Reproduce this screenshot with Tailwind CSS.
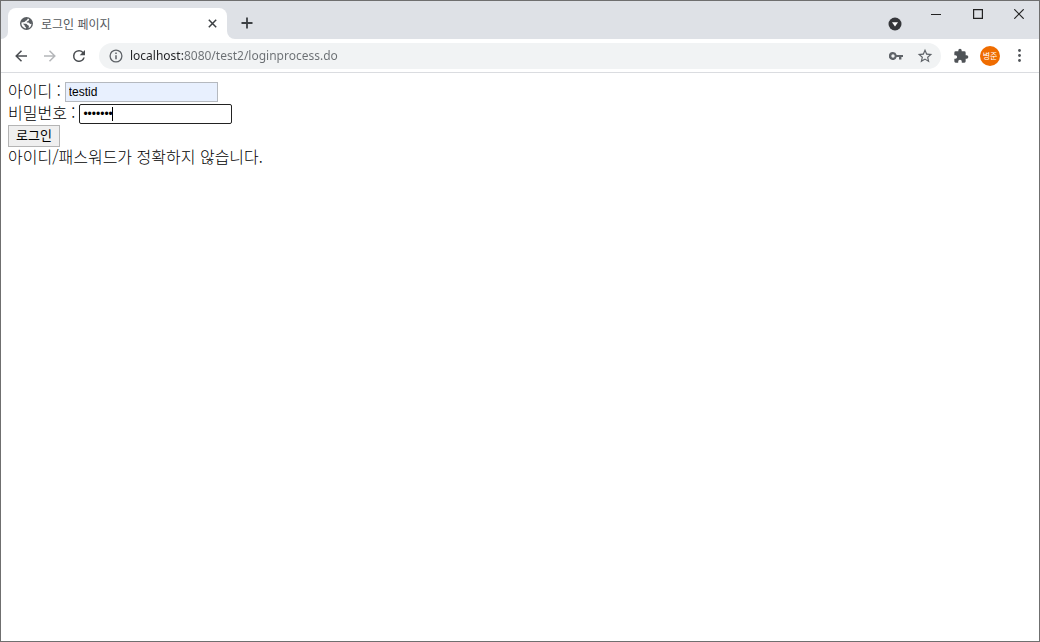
<!DOCTYPE html>
<html lang="ko">
  <head>
    <meta charset="UTF-8" />
    <title>로그인 페이지</title>
    <meta name="viewport" content="width=device-width, initial-scale=1.0" />
    <script src="https://cdn.jsdelivr.net/npm/@tailwindcss/browser@4"></script>
  </head>
  <body
    class="min-h-screen flex flex-col bg-white border border-[#6f6f6f] font-['Noto_Sans_CJK_KR',sans-serif]"
  >
    <!-- Tab strip -->
    <header class="flex h-[38px] bg-[#dee1e6] text-[#3c4043]">
      <div class="flex w-[7px] items-end bg-white">
        <span class="h-full w-full rounded-br-lg bg-[#dee1e6]"></span>
      </div>
      <div class="flex h-[31px] w-[219px] items-center self-end rounded-t-lg bg-white pl-3 pr-[7px]">
        <svg class="size-[13px] shrink-0" viewBox="0 0 14 14">
          <circle cx="7" cy="7" r="7" fill="#5a5e62" />
          <path
            fill="#fff"
            d="M8.600 1.700C7.700 2.500 8 3.500 6.700 3.900C5.500 4.100 6 5 4.800 5.500L1.600 5.900C1.300 8 1.900 9.500 2.900 10.600L4.300 11.700C5 12.100 5.700 12.300 6.300 12.300V10.900C5.300 10.700 4.900 9.900 5 9L3 7.300L6.500 7.300C7.700 7.400 7.500 8.500 8.500 8.800C9.500 8.900 9.800 9.600 9.500 11.300L8.500 12.100C11 11.700 12.300 9.500 12.400 7.200L11 7.500C10 7.300 10.200 6.200 9 6H7.400C7 5 7.800 4.700 8.600 4.600C9.400 4.300 9.300 3.300 10 2.500Z"
          />
        </svg>
        <span class="ml-2 flex-1 text-xs text-[#55595d]">로그인 페이지</span>
        <button type="button" aria-label="탭 닫기" class="flex size-4 items-center justify-center">
          <svg class="size-[9px]" viewBox="0 0 9 9" fill="none" stroke="#3c4043" stroke-width="1.500">
            <path d="M.8.8l7.400 7.400M8.200.8L.8 8.200" />
          </svg>
        </button>
      </div>
      <div class="w-2 bg-white">
        <div class="h-full w-full rounded-bl-lg bg-[#dee1e6]"></div>
      </div>
      <button type="button" aria-label="새 탭" class="ml-1 mt-[14px] flex size-4 items-center justify-center">
        <svg class="size-[12px]" viewBox="0 0 12 12" fill="none" stroke="#3c4043" stroke-width="1.800">
          <path d="M6 .5v11M.5 6h11" />
        </svg>
      </button>
      <div class="ml-auto flex">
        <button type="button" aria-label="탭 검색" class="flex w-6 items-end justify-center pb-2">
          <svg class="size-[14px]" viewBox="0 0 14 14">
            <circle cx="7" cy="7" r="6.500" fill="#35363a" />
            <path d="M4 5.200h6L7 9.400z" fill="#fff" />
          </svg>
        </button>
        <button type="button" aria-label="최소화" class="ml-2 flex h-[26px] w-[42px] items-center justify-center">
          <svg class="size-[10px]" viewBox="0 0 10 10" stroke="#222"><path d="M0 5.500h10" /></svg>
        </button>
        <button type="button" aria-label="최대화" class="flex h-[26px] w-[42px] items-center justify-center">
          <svg class="size-[10px]" viewBox="0 0 10 10" fill="none" stroke="#222" stroke-width="1.200">
            <path d="M.6.6h8.800v8.800H.6z" />
          </svg>
        </button>
        <button type="button" aria-label="닫기" class="flex h-[26px] w-10 items-center justify-center">
          <svg class="size-[10px]" viewBox="0 0 10 10" stroke="#222" stroke-width="1.200">
            <path d="M.3.3l9.400 9.400M9.700.3L.3 9.700" />
          </svg>
        </button>
      </div>
    </header>

    <!-- Toolbar -->
    <nav class="flex h-[34px] items-center border-b border-[#dadce0] px-3 text-[#5f6368]">
      <button type="button" aria-label="뒤로" class="flex size-4 items-center justify-center">
        <svg class="size-[12px]" viewBox="0 0 12 12" fill="none" stroke="#4a4d51" stroke-width="1.500">
          <path d="M12 6H1.200M6.500.7L1.200 6l5.300 5.300" />
        </svg>
      </button>
      <button type="button" aria-label="앞으로" class="ml-[13px] flex size-4 items-center justify-center">
        <svg class="size-[12px]" viewBox="0 0 12 12" fill="none" stroke="#b4b6b9" stroke-width="1.500">
          <path d="M0 6h10.800M5.500.7L10.800 6l-5.300 5.300" />
        </svg>
      </button>
      <button type="button" aria-label="새로고침" class="ml-[13px] flex size-4 items-center justify-center">
        <svg class="size-[18px] shrink-0" viewBox="0 0 24 24" fill="#4a4d51">
          <path
            d="M17.650 6.350A7.960 7.960 0 0 0 12 4a8 8 0 1 0 7.730 10h-2.080A6 6 0 1 1 12 6c1.660 0 3.140.69 4.220 1.780L13 11h7V4z"
          />
        </svg>
      </button>

      <div class="ml-3 flex h-[26px] flex-1 items-center rounded-full bg-[#f1f3f4] pl-[10px] pr-2">
        <svg class="size-[14px] shrink-0" viewBox="0 0 14 14" fill="none" stroke="#5f6368" stroke-width="1.300">
          <circle cx="7" cy="7" r="5.900" />
          <path d="M7 6.200v4M7 3.600v1.400" stroke-width="1.500" />
        </svg>
        <input
          type="text"
          aria-label="주소창"
          value="localhost:8080/test2/loginprocess.do"
          class="ml-[7px] min-w-0 flex-1 bg-[linear-gradient(to_right,#202124_54px,#6b6f73_54px)] bg-clip-text font-['Noto_Sans',sans-serif] text-xs text-transparent outline-none"
        />
        <button type="button" aria-label="비밀번호 관리" class="flex size-4 items-center justify-center">
          <svg class="h-[8px] w-[14px]" viewBox="0 0 14 8">
            <path
              fill="#5f6368"
              fill-rule="evenodd"
              d="M4 0a4 4 0 1 0 3.700 5.100H10V7.600h2.400V5.100H14V2.900H7.700A4 4 0 0 0 4 0zM4 2.300a1.700 1.700 0 1 1 0 3.400 1.700 1.700 0 0 1 0-3.400z"
            />
          </svg>
        </button>
        <button type="button" aria-label="북마크" class="ml-[13px] flex size-4 items-center justify-center">
          <svg class="size-4" viewBox="1 1 22 22" fill="#5f6368">
            <path
              d="M22 9.240l-7.190-.62L12 2 9.190 8.630 2 9.240l5.460 4.730L5.820 21 12 17.270 18.180 21l-1.630-7.030L22 9.240zM12 15.400l-3.760 2.270 1-4.280-3.320-2.880 4.380-.38L12 6.100l1.710 4.040 4.380.38-3.320 2.880 1 4.280L12 15.400z"
            />
          </svg>
        </button>
      </div>

      <button type="button" aria-label="확장 프로그램" class="ml-3 flex size-4 items-center justify-center">
        <svg class="size-4" viewBox="0 0 24 24" fill="#4f5357">
          <path
            d="M20.500 11H19V7a2 2 0 0 0-2-2h-4V3.500a2.500 2.500 0 0 0-5 0V5H4a2 2 0 0 0-2 2v3.800h1.500a2.700 2.700 0 0 1 0 5.400H2V20a2 2 0 0 0 2 2h3.800v-1.500a2.700 2.700 0 0 1 5.400 0V22H17a2 2 0 0 0 2-2v-4h1.500a2.500 2.500 0 0 0 0-5z"
          />
        </svg>
      </button>
      <button
        type="button"
        class="ml-[11px] flex size-5 items-center justify-center rounded-full bg-[#ef6c00] text-[8px] leading-none whitespace-nowrap text-white"
      >
        병준
      </button>
      <button type="button" aria-label="메뉴" class="ml-[11px] flex size-4 items-center justify-center">
        <svg class="h-[13px] w-[3px]" viewBox="0 0 3 13" fill="#4f5357">
          <circle cx="1.500" cy="1.500" r="1.400" />
          <circle cx="1.500" cy="6.500" r="1.400" />
          <circle cx="1.500" cy="11.500" r="1.400" />
        </svg>
      </button>
    </nav>

    <!-- Page -->
    <main class="flex-1 px-[7px] pt-2 text-base leading-[18px] font-light text-black">
      <form>
        <div class="flex h-[22px] gap-1">
          <label for="userid">아이디 :</label>
          <input
            id="userid"
            type="text"
            value="testid"
            class="h-5 w-[153px] self-center border border-[#b5b9bf] bg-[#e8f0fe] px-[3px] font-['Liberation_Sans',sans-serif] text-xs font-normal outline-none"
          />
        </div>
        <div class="flex h-[22px] gap-1">
          <label for="userpw">비밀번호 :</label>
          <div class="relative self-center">
            <input
              id="userpw"
              type="password"
              value="1234567"
              class="block h-5 w-[153px] rounded-xs border border-[#222] bg-white px-[3px] font-['Liberation_Sans',sans-serif] text-xs font-normal outline-none"
            />
            <span class="absolute top-[3px] left-[33px] h-[14px] w-px bg-black"></span>
          </div>
        </div>
        <button
          type="submit"
          class="block h-[22px] w-[52px] border border-[#b4b4b4] bg-[#efefef] pb-1 text-[13px] leading-none font-normal"
        >
          로그인
        </button>
      </form>
      <p>아이디/패스워드가 정확하지 않습니다.</p>
    </main>
  </body>
</html>
